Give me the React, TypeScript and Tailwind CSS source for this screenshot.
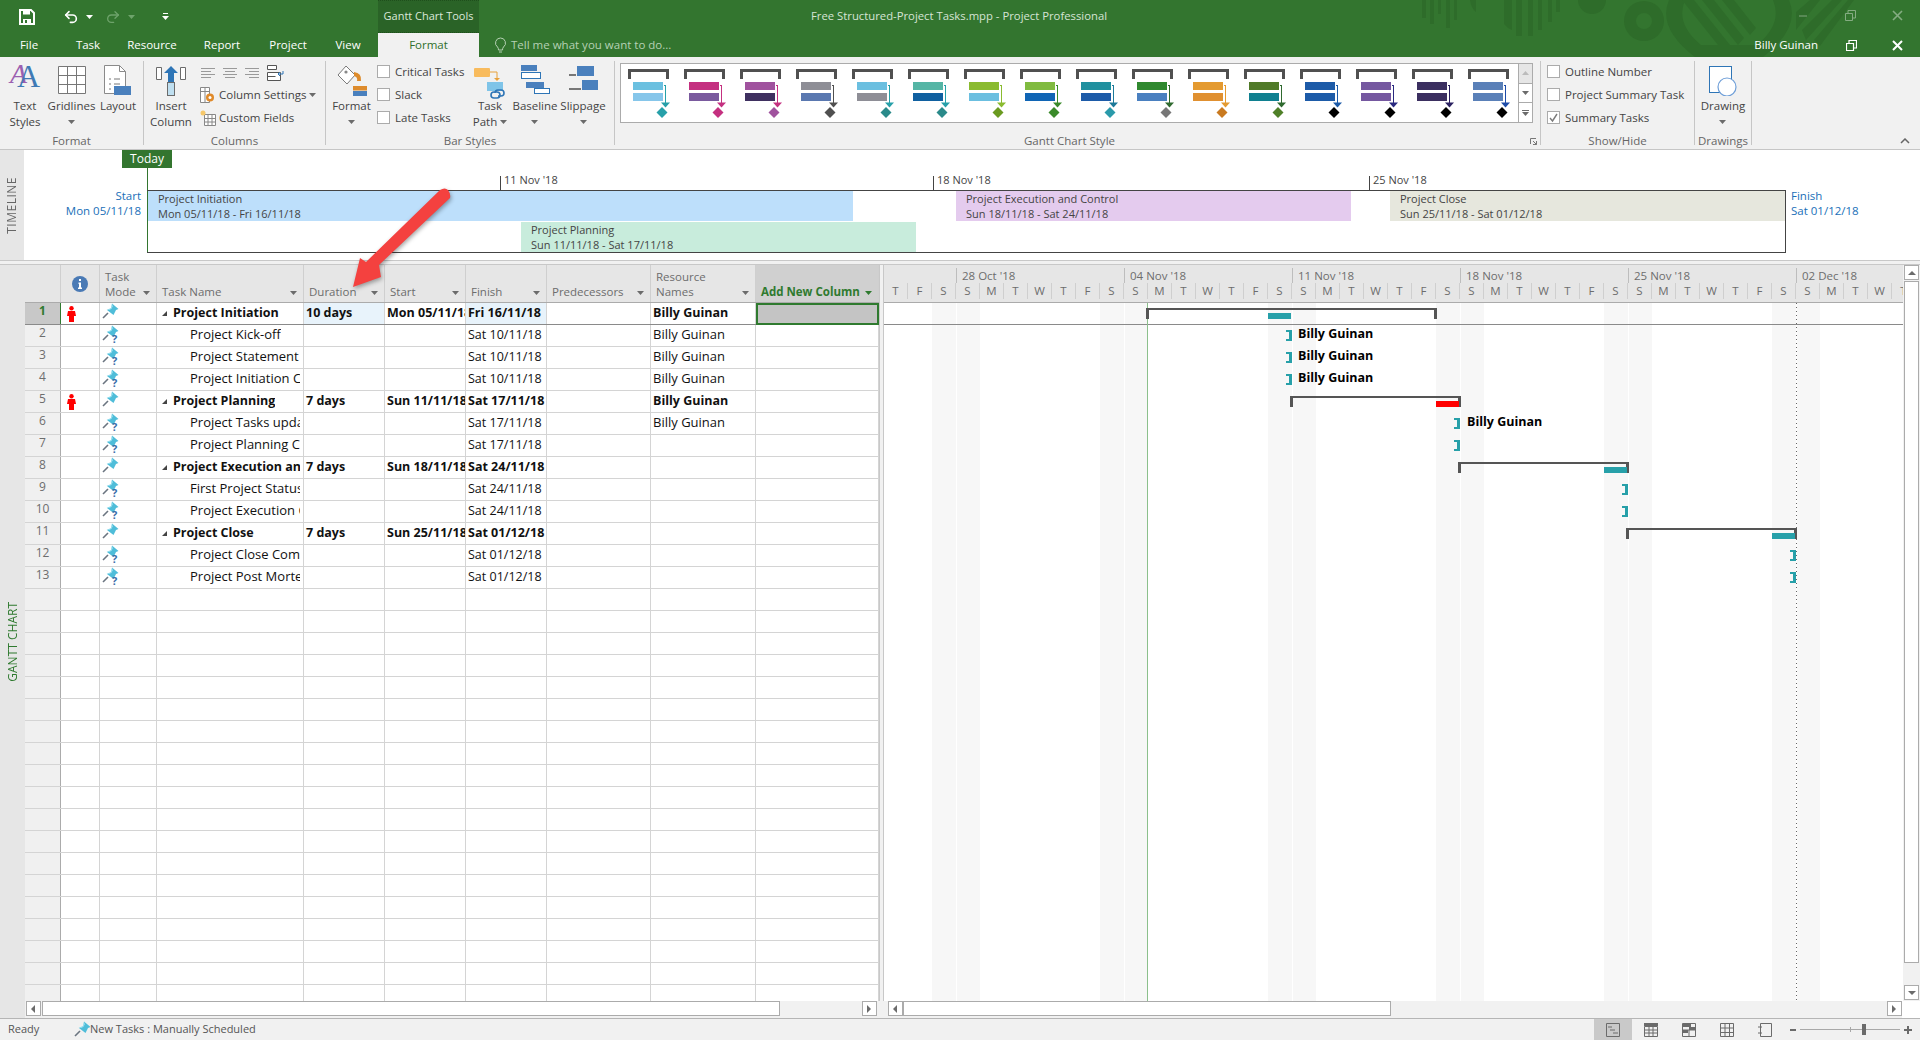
import { Undo2, Redo2 } from "lucide-react";

const GREEN = "#33752f";

const tabs = [
  { label: "File", w: "w-[58px]" },
  { label: "Task", w: "w-[60px]" },
  { label: "Resource", w: "w-[68px]" },
  { label: "Report", w: "w-[72px]" },
  { label: "Project", w: "w-[60px]" },
  { label: "View", w: "w-[60px]" },
];

const galleryStyles = [
  ["#6bc0e0", "#86c6ea", "#27a0a9", "#27a0a9"],
  ["#c43080", "#7a5a9e", "#c43080", "#c43080"],
  ["#a0529e", "#3f3060", "#c43080", "#a0529e"],
  ["#8e8e96", "#5a78b0", "#505050", "#505050"],
  ["#6bbfe0", "#8e8e96", "#27a0a9", "#2a8a8a"],
  ["#55b5a5", "#1060a0", "#27a0a9", "#2a8a8a"],
  ["#8abb30", "#6bbfe0", "#8abb30", "#6a9a20"],
  ["#80bb40", "#1065b5", "#3a8a2a", "#3a8a2a"],
  ["#20909f", "#1d5ba8", "#1d7a9a", "#2a9aaa"],
  ["#30892f", "#4a80c0", "#2f6a2f", "#777777"],
  ["#e49a30", "#e09030", "#e49a30", "#c97a20"],
  ["#507a28", "#108090", "#2f6a2f", "#4f8028"],
  ["#1d5ba8", "#1d5ba8", "#1d5ba8", "#000000"],
  ["#7558a0", "#7558a0", "#2a2a80", "#000000"],
  ["#3b2f60", "#3b2f60", "#2a2060", "#000000"],
  ["#5a80b8", "#5a80b8", "#1d4ba8", "#000000"],
];

const rows = [
  { n: 1, name: "Project Initiation", sum: true, late: true, dur: "10 days", start: "Mon 05/11/18", finish: "Fri 16/11/18", res: "Billy Guinan" },
  { n: 2, name: "Project Kick-off", finish: "Sat 10/11/18", res: "Billy Guinan" },
  { n: 3, name: "Project Statement of Work", finish: "Sat 10/11/18", res: "Billy Guinan" },
  { n: 4, name: "Project Initiation Complete", finish: "Sat 10/11/18", res: "Billy Guinan" },
  { n: 5, name: "Project Planning", sum: true, late: true, dur: "7 days", start: "Sun 11/11/18", finish: "Sat 17/11/18", res: "Billy Guinan" },
  { n: 6, name: "Project Tasks updated", finish: "Sat 17/11/18", res: "Billy Guinan" },
  { n: 7, name: "Project Planning Complete", finish: "Sat 17/11/18" },
  { n: 8, name: "Project Execution and Control", sum: true, dur: "7 days", start: "Sun 18/11/18", finish: "Sat 24/11/18" },
  { n: 9, name: "First Project Status Report", finish: "Sat 24/11/18" },
  { n: 10, name: "Project Execution Complete", finish: "Sat 24/11/18" },
  { n: 11, name: "Project Close", sum: true, dur: "7 days", start: "Sun 25/11/18", finish: "Sat 01/12/18" },
  { n: 12, name: "Project Close Complete", finish: "Sat 01/12/18" },
  { n: 13, name: "Project Post Mortem", finish: "Sat 01/12/18" },
];

const blankRows = Array.from({ length: 19 }, (_, i) => i);
const dayLetters = ["S", "M", "T", "W", "T", "F", "S"];
const weeks = ["28 Oct '18", "04 Nov '18", "11 Nov '18", "18 Nov '18", "25 Nov '18", "02 Dec '18"];
// gantt starts on a Thursday, 3 days before the first week tick
const days = ["T", "F", "S", ...Array.from({ length: 42 }, (_, i) => dayLetters[i % 7])];

const summaries = [
  { x: 262, w: 291, y: 5 },
  { x: 406, w: 171, y: 93 },
  { x: 574, w: 171, y: 159 },
  { x: 742, w: 171, y: 225 },
];
const teal = [
  { x: 384, y: 10, c: "#27a0a9" },
  { x: 552, y: 98, c: "#ff0000" },
  { x: 720, y: 164, c: "#27a0a9" },
  { x: 888, y: 230, c: "#27a0a9" },
];
const brackets = [
  { x: 402, y: 27 },
  { x: 402, y: 49 },
  { x: 402, y: 71 },
  { x: 570, y: 115 },
  { x: 570, y: 137 },
  { x: 738, y: 181 },
  { x: 738, y: 203 },
  { x: 906, y: 247 },
  { x: 906, y: 269 },
];
const ganttNames = [
  { x: 414, y: 22 },
  { x: 414, y: 44 },
  { x: 414, y: 66 },
  { x: 583, y: 110 },
];

const Caret = ({ color = "#6b6b6b" }: { color?: string }) => (
  <svg width="7" height="4" viewBox="0 0 7 4" className="flex-none">
    <path d="M0 0h7L3.5 4z" fill={color} />
  </svg>
);

const PinIcon = ({ question = true }: { question?: boolean }) => (
  <svg width="18" height="18" viewBox="0 0 18 18" className="mt-[-3px] flex-none">
    <path d="M1 15l5-5" stroke="#6b7580" strokeWidth="1.6" />
    <path d="M10 0.500l6.500 5.500-2.500 1-2.500 5-6.500-5 4.500-1.500z" fill="#4fbdd9" />
    <path d="M10 0.500l1 3-3 3.500-3.500 0 4.500-2z" fill="#8fdcee" />
    {question && (
      <text x="10" y="18" fontSize="11" fontWeight="700" fill="#3a6eaa" fontFamily="Open Sans, sans-serif">?</text>
    )}
  </svg>
);

const PersonIcon = () => (
  <svg width="9" height="16" viewBox="0 0 9 16" className="flex-none">
    <circle cx="4.5" cy="2.2" r="2.2" fill="#f00" />
    <path d="M1 5h7l1 5H7v6H2v-6H0z" fill="#f00" />
  </svg>
);

const Bracket = ({ x, y }: { x: number; y: number }) => (
  <div
    className="absolute h-[11px] w-[6px] border-y-2 border-r-[3px] border-[#27a0a9]"
    style={{ left: x, top: y }}
  />
);

const Summary = ({ x, w, y }: { x: number; w: number; y: number }) => (
  <div
    className="absolute h-[11px] border-x-[3px] border-t-2 border-[#555555]"
    style={{ left: x, top: y, width: w }}
  />
);

const Check = ({ label, on }: { label: string; on?: boolean }) => (
  <div className="flex h-[23px] items-center gap-[5px]">
    <div className="flex h-[13px] w-[13px] items-center justify-center border border-[#ababab] bg-white">
      {on && (
        <svg width="11" height="11" viewBox="0 0 11 11">
          <path d="M2 6l2.5 3L9 2" fill="none" stroke="#7a7a7a" strokeWidth="1.4" />
        </svg>
      )}
    </div>
    <span>{label}</span>
  </div>
);

const BigButton = ({
  w,
  icon,
  lines,
  caret,
  inlineCaret,
}: {
  w: string;
  icon: React.ReactNode;
  lines: string[];
  caret?: boolean;
  inlineCaret?: boolean;
}) => (
  <div className={`flex ${w} flex-none flex-col items-center`}>
    <div className="flex h-[34px] items-start justify-center">{icon}</div>
    <div className="mt-[2px] flex flex-col items-center whitespace-nowrap leading-[16px]">
      {lines.map((l, i) => (
        <div key={l} className="flex items-center gap-[3px]">
          <span>{l}</span>
          {inlineCaret && i === lines.length - 1 && <Caret />}
        </div>
      ))}
      {caret && (
        <div className="flex h-[16px] items-center">
          <Caret />
        </div>
      )}
    </div>
  </div>
);

const Group = ({
  w,
  label,
  labelClass = "",
  children,
}: {
  w: string;
  label: string;
  labelClass?: string;
  children: React.ReactNode;
}) => (
  <div className={`flex h-[92px] ${w} flex-none flex-col`}>
    <div className="flex h-[76px] pt-[5px]">{children}</div>
    <div className={`flex h-[16px] items-center justify-center text-[#666666] ${labelClass}`}>{label}</div>
  </div>
);

const Sep = () => <div className="my-1 w-px flex-none bg-[#c6c6c6]" />;

const TextStylesIcon = () => (
  <div className="relative h-[30px] w-[32px]">
    <span className="absolute left-[1px] top-[-4px] text-[28px] italic leading-[32px] text-[#9b5fb0] [font-family:'Liberation_Serif',serif]">A</span>
    <span className="absolute left-[8px] top-[-3px] text-[32px] leading-[34px] text-[#3f7ab5] [font-family:'Liberation_Serif',serif]">A</span>
  </div>
);

const GridIcon = () => (
  <svg width="30" height="30" viewBox="0 0 30 30" className="mt-[3px]">
    <path d="M1.5 1.5h27v27h-27zM1.5 10.5h27M1.5 19.5h27M10.5 1.5v27M19.5 1.5v27" fill="#fff" stroke="#777" />
  </svg>
);

const LayoutIcon = () => (
  <svg width="30" height="32" viewBox="0 0 30 32" className="mt-[2px]">
    <path d="M1.5 1.5h15l6 6v22h-21z" fill="#fff" stroke="#8a8a8a" />
    <path d="M16.5 1.5v6h6" fill="none" stroke="#8a8a8a" />
    <path d="M6 15h2M11 15h6M6 20h2M11 20h6M6 25h2" stroke="#777" />
    <rect x="11" y="22" width="17" height="9" fill="#4a80bd" />
  </svg>
);

const InsertIcon = () => (
  <svg width="32" height="32" viewBox="0 0 32 32" className="mt-[2px]">
    <path d="M1.5 3.5h5v12h-5zM25.5 3.5h5v12h-5z" fill="#fff" stroke="#6b6b6b" />
    <path d="M16 2l7 7h-4v9h-6V9H9z" fill="#2e75b6" />
    <rect x="12.5" y="18.5" width="7" height="13" fill="#bfdff0" stroke="#6b6b6b" />
  </svg>
);

const AlignIcon = ({ d }: { d: string }) => (
  <svg width="16" height="14" viewBox="0 0 16 14">
    <path d={d} stroke="#9a9a9a" />
  </svg>
);

const FormatIcon = () => (
  <svg width="30" height="32" viewBox="0 0 30 32" className="mt-[2px]">
    <path d="M9 2l9 9-8 9L1 11z" fill="#fff" stroke="#7a7a7a" />
    <circle cx="9" cy="8" r="1.6" fill="#888" />
    <path d="M17 8q8 1 7 9h-4q1-4-3-5z" fill="#dd8b2c" />
    <rect x="16" y="22" width="15" height="4.5" fill="#dd8b2c" />
    <rect x="16" y="27" width="15" height="5" fill="#4a80bd" />
  </svg>
);

const TaskPathIcon = () => (
  <svg width="32" height="34" viewBox="0 0 32 34" className="mt-[3px]">
    <rect x="0" y="3" width="16" height="9" rx="1" fill="#f8bb5d" />
    <path d="M16 7h7v7" fill="none" stroke="#e8a13a" />
    <path d="M20 13h6l-3 3z" fill="#e8a13a" />
    <rect x="13" y="17" width="16" height="9" fill="#7fc4e8" />
    <path d="M17 30a3 3 0 013-3h3a3 3 0 010 6h-3a3 3 0 01-3-3zM21 28a3 3 0 013-3h3a3 3 0 010 6h-3" fill="none" stroke="#2e75b6" strokeWidth="1.6" />
  </svg>
);

const BaselineIcon = () => (
  <svg width="30" height="30" viewBox="0 0 30 30" className="mt-[2px]">
    <rect x="1" y="1" width="16" height="6" fill="#4a80bd" />
    <rect x="1.5" y="8.5" width="19" height="6" fill="#fff" stroke="#2e75b6" />
    <rect x="6" y="18" width="18" height="6" fill="#4a80bd" />
    <rect x="14.5" y="24.5" width="15" height="5" fill="#fff" stroke="#2e75b6" />
  </svg>
);

const SlippageIcon = () => (
  <svg width="30" height="30" viewBox="0 0 30 30" className="mt-[2px]">
    <rect x="9" y="2" width="17" height="10" fill="#4a80bd" />
    <rect x="1" y="10" width="7" height="2" fill="#777" />
    <rect x="14" y="16" width="16" height="10" fill="#4a80bd" />
    <rect x="1" y="24" width="12" height="2" fill="#777" />
  </svg>
);

const DrawingIcon = () => (
  <svg width="30" height="32" viewBox="0 0 30 32" className="mt-[2px]">
    <rect x="1.5" y="2.5" width="22" height="26" fill="#fff" stroke="#2e75b6" />
    <circle cx="19" cy="23" r="9" fill="#fff" stroke="#6f9fd8" strokeWidth="1.2" />
  </svg>
);

const GalleryItem = ({ colors }: { colors: string[] }) => (
  <svg width="56" height="58" viewBox="0 0 56 58" className="flex-none" shapeRendering="crispEdges">
    <path d="M1.5 16V7h38v9" transform="translate(7 -1)" fill="none" stroke="#505050" strokeWidth="3" />
    <rect x="12" y="18" width="30" height="8" fill={colors[0]} />
    <rect x="12" y="29" width="30" height="8" fill={colors[1]} />
    <path d="M42.5 21h1.5v18" fill="none" stroke={colors[2]} />
    <path d="M40 38.5h9l-4.500 5z" fill={colors[2]} shapeRendering="auto" />
    <path d="M41 43l5.500 5.500-5.500 5.500-5.500-5.500z" fill={colors[3]} shapeRendering="auto" />
  </svg>
);

const TitleBar = () => (
  <div className="relative h-[57px] flex-none bg-[#33752f] text-white">
    {/* background art of the title bar */}
    <svg width="460" height="57" viewBox="0 0 460 57" className="absolute right-[40px] top-0">
      <g fill="#2e6c2a">
        <path d="M2 0h4v18H2zM10 0h4v24H10zM18 0h3v14h-3zM26 0h4v28h-4zM34 0h3v20h-3zM50 0h6v12q-5-4-6-12zM84 0h8v30q-5-2-8-6zM96 0h6v36h-6zM108 0h5v36h-5zM118 0h4v30h-4zM128 0h4v22h-4zM136 0h4v12h-4z" />
        <path d="M158 0h28a14 14 0 01-28 0z" />
        <path fillRule="evenodd" d="M224 1a20 20 0 100 40 20 20 0 000-40zm0 12a8 8 0 110 16 8 8 0 010-16z" />
        <path fillRule="evenodd" d="M249 0h120q12 28-26 57h-68q-38-29-26-57zm16 0q-10 24 16 45h56q26-21 16-45z" />
        <path d="M262 0l12 0 36 45h-12zM282 0h12l30 38-6 7zM302 0h12l22 28-6 7z" />
        <path d="M376 12l14-12h10l-24 30zM382 30l30-30h10l-36 40zM394 40l34-40h6l-34 46z" />
      </g>
    </svg>

    <div className="relative flex h-[33px]">
      <div className="flex w-[378px] flex-none items-center">
        <svg width="16" height="16" viewBox="0 0 16 16" className="ml-[19px] mr-[28px] flex-none">
          <path d="M1 1h11l3 3v11H1z" fill="none" stroke="#fff" strokeWidth="2" />
          <path d="M4 1.500h7v4H4zM4 10h8v5H4z" fill="#fff" />
          <path d="M6 11h2v3H6z" fill={GREEN} />
        </svg>
        <Undo2 size={16} strokeWidth={2.4} className="flex-none" />
        <div className="ml-[7px] mr-[12px]">
          <Caret color="#ffffff" />
        </div>
        <Redo2 size={16} strokeWidth={2} className="flex-none text-[#6ea36b]" />
        <div className="ml-[7px] mr-[27px]">
          <Caret color="#6ea36b" />
        </div>
        <svg width="7" height="7" viewBox="0 0 7 7" className="flex-none">
          <path d="M1 0h5v1H1zM0 3h7L3.500 7z" fill="#fff" />
        </svg>
      </div>
      <div className="flex w-[101px] flex-none items-center justify-center whitespace-nowrap border-y border-dotted border-[#1f4f1c] bg-[#2a6327] text-[11px] text-[#dbe8da]">
        Gantt Chart Tools
      </div>
      <div className="flex w-[332px] flex-none" />
      <div className="flex w-[296px] flex-none items-center justify-center whitespace-nowrap text-[11.3px] text-[#d6e4d5]">
        Free Structured-Project Tasks.mpp - Project Professional
      </div>
      <div className="ml-auto flex h-[30px] items-center opacity-40">
        <svg width="10" height="10" viewBox="0 0 10 10" className="mr-[37px]">
          <path d="M1 6h8" stroke="#fff" />
        </svg>
        <svg width="11" height="11" viewBox="0 0 11 11" className="mr-[36px]">
          <path d="M0.500 3.500h7v7h-7zM3 3V0.500h7.500V8H8" fill="none" stroke="#fff" />
        </svg>
        <svg width="11" height="11" viewBox="0 0 11 11" className="mr-[17px]">
          <path d="M1 1l9 9M10 1l-9 9" stroke="#fff" strokeWidth="1.6" />
        </svg>
      </div>
    </div>

    <div className="relative flex h-[24px] items-center">
      {tabs.map((t) => (
        <div key={t.label} className={`${t.w} flex-none text-center`}>
          {t.label}
        </div>
      ))}
      <div className="flex h-full w-[101px] flex-none items-center justify-center bg-[#f1f1f1] text-[#2f6f2b]">
        Format
      </div>
      <svg width="13" height="17" viewBox="0 0 13 17" className="ml-[15px] mr-[4px] flex-none">
        <path d="M6.500 1a5 5 0 00-3 9q1 1 1 3h4q0-2 1-3a5 5 0 00-3-9zM5 15h3" fill="none" stroke="#b6d1b4" />
      </svg>
      <span className="whitespace-nowrap text-[#b6d1b4]">Tell me what you want to do...</span>
      <span className="ml-auto flex-none whitespace-nowrap">Billy Guinan</span>
      <svg width="11" height="11" viewBox="0 0 11 11" className="ml-[28px] flex-none">
        <path d="M0.500 3.500h7v7h-7zM3 3V0.500h7.500V8H8" fill="none" stroke="#fff" strokeWidth="1.200" />
      </svg>
      <svg width="11" height="11" viewBox="0 0 11 11" className="ml-[35px] mr-[17px] flex-none">
        <path d="M1 1l9 9M10 1l-9 9" stroke="#fff" strokeWidth="2" />
      </svg>
    </div>
  </div>
);

const Ribbon = () => (
  <div className="flex h-[93px] flex-none border-b border-[#c6c6c6] bg-[#f1f1f1] text-[#444444]">
    <Group w="w-[143px]" label="Format">
      <BigButton w="w-[46px] ml-[2px]" icon={<TextStylesIcon />} lines={["Text", "Styles"]} />
      <BigButton w="w-[47px]" icon={<GridIcon />} lines={["Gridlines"]} caret />
      <BigButton w="w-[46px]" icon={<LayoutIcon />} lines={["Layout"]} />
    </Group>
    <Sep />
    <Group w="w-[181px]" label="Columns">
      <div className="ml-[1px] flex">
        <BigButton w="w-[52px]" icon={<InsertIcon />} lines={["Insert", "Column"]} />
      </div>
      <div className="ml-[3px] flex flex-col">
        <div className="flex h-[21px] items-center gap-[6px]">
          <AlignIcon d="M1 2.500h14M1 5.500h10M1 8.500h14M1 11.500h10" />
          <AlignIcon d="M1 2.500h14M3 5.500h10M1 8.500h14M3 11.500h10" />
          <AlignIcon d="M1 2.500h14M5 5.500h10M1 8.500h14M5 11.500h10" />
          <svg width="18" height="18" viewBox="0 0 18 18">
            <path d="M1.500 1.500h9v4h-9zM1.500 8.500h13v8h-13zM1.500 12.500h8" fill="#fff" stroke="#555" />
            <path d="M17 7v3h-5m2-2l-2 2 2 2" fill="none" stroke="#2e75b6" />
          </svg>
        </div>
        <div className="flex h-[23px] items-center gap-[3px] whitespace-nowrap">
          <svg width="16" height="16" viewBox="0 0 16 16" className="flex-none">
            <path d="M0.500 0.500h9v15h-9zM0.500 4.500h9M5 0.500v15" fill="#fff" stroke="#888" />
            <circle cx="10" cy="10.500" r="4" fill="#e08a2a" />
            <circle cx="10" cy="10.500" r="1.500" fill="#fff" />
          </svg>
          <span>Column Settings</span>
          <Caret />
        </div>
        <div className="flex h-[23px] items-center gap-[3px] whitespace-nowrap">
          <svg width="16" height="16" viewBox="0 0 16 16" className="flex-none">
            <path d="M4.500 4.500h11v11h-11zM4.500 8.500h11M4.500 12h11M8 4.500v11M12 4.500v11" fill="#fff" stroke="#888" />
            <circle cx="3" cy="3" r="2.500" fill="#f6c86b" />
          </svg>
          <span>Custom Fields</span>
        </div>
      </div>
    </Group>
    <Sep />
    <Group w="w-[288px]" label="Bar Styles">
      <BigButton w="w-[51px]" icon={<FormatIcon />} lines={["Format"]} caret />
      <div className="mt-[-2px] flex w-[91px] flex-none flex-col whitespace-nowrap">
        <Check label="Critical Tasks" />
        <Check label="Slack" />
        <Check label="Late Tasks" />
      </div>
      <BigButton w="w-[44px]" icon={<TaskPathIcon />} lines={["Task", "Path"]} inlineCaret />
      <BigButton w="w-[46px]" icon={<BaselineIcon />} lines={["Baseline"]} caret />
      <BigButton w="w-[50px]" icon={<SlippageIcon />} lines={["Slippage"]} caret />
    </Group>
    <Sep />
    <Group w="w-[925px]" label="Gantt Chart Style" labelClass="pr-[16px]">
      <div className="ml-[5px] mt-px flex h-[60px] w-[899px] flex-none border border-[#ababab] bg-white pl-0">
        {galleryStyles.map((c, i) => (
          <GalleryItem key={i} colors={c} />
        ))}
      </div>
      <div className="mt-px flex h-[60px] w-[14px] flex-none flex-col border-y border-r border-[#ababab] bg-white">
        <div className="flex flex-1 items-center justify-center border-b border-[#ababab] bg-[#e6e6e6]">
          <svg width="7" height="4" viewBox="0 0 7 4"><path d="M0 4h7L3.500 0z" fill="#bbb" /></svg>
        </div>
        <div className="flex flex-1 items-center justify-center border-b border-[#ababab]">
          <Caret />
        </div>
        <div className="flex flex-1 flex-col items-center justify-center gap-px">
          <div className="h-px w-[7px] bg-[#6b6b6b]" />
          <Caret />
        </div>
      </div>
      <svg width="7" height="7" viewBox="0 0 7 7" className="absolute left-[1530px] top-[138px]">
        <path d="M0.500 6V0.500H6M3 3l3.500 3.500M6.500 3v3.500H3" fill="none" stroke="#777" />
      </svg>
    </Group>
    <Sep />
    <Group w="w-[153px]" label="Show/Hide">
      <div className="ml-[6px] mt-[-2px] flex flex-col whitespace-nowrap">
        <Check label="Outline Number" />
        <Check label="Project Summary Task" />
        <Check label="Summary Tasks" on />
      </div>
    </Group>
    <Sep />
    <Group w="w-[56px]" label="Drawings">
      <BigButton w="w-[56px]" icon={<DrawingIcon />} lines={["Drawing"]} caret />
    </Group>
    <Sep />
    <div className="relative flex-1">
      <svg width="10" height="6" viewBox="0 0 10 6" className="absolute right-[10px] top-[81px]">
        <path d="M1 5l4-4 4 4" fill="none" stroke="#666" strokeWidth="1.500" />
      </svg>
    </div>
  </div>
);

const TimelineBar = ({
  x,
  y,
  w,
  h,
  color,
  title,
  dates,
}: {
  x: number;
  y: number;
  w: number;
  h: number;
  color: string;
  title: string;
  dates: string;
}) => (
  <div
    className="absolute overflow-hidden whitespace-nowrap pl-[10px] text-[11px] leading-[15px] text-[#444444]"
    style={{ left: x, top: y, width: w, height: h, backgroundColor: color }}
  >
    <div>{title}</div>
    <div>{dates}</div>
  </div>
);

const Timeline = () => (
  <div className="flex h-[110px] flex-none">
    <div className="flex w-[24px] flex-none items-center justify-center bg-[#e6e6e6]">
      <span className="rotate-180 text-[12px] tracking-[0.5px] text-[#666666] [writing-mode:vertical-rl]">TIMELINE</span>
    </div>
    {/* offsets below are from x=24, y=150 */}
    <div className="relative flex-1 bg-white">
      <div className="absolute left-[98px] top-0 flex h-[18px] w-[50px] items-center justify-center bg-[#33752f] text-[12px] text-white">Today</div>
      <div className="absolute left-[123px] top-[18px] h-[85px] w-px bg-[#33752f]" />
      <div className="absolute right-[135px] top-[40px] left-[123px] h-px bg-[#444444]" />
      <div className="absolute right-[135px] top-[102px] left-[123px] h-px bg-[#444444]" />
      <div className="absolute left-[1761px] top-[40px] h-[63px] w-px bg-[#444444]" />

      <div className="absolute left-[0px] top-[38px] w-[117px] text-right leading-[15px] text-[#1a6fb8]">
        <div>Start</div>
        <div>Mon 05/11/18</div>
      </div>
      <div className="absolute left-[1767px] top-[38px] leading-[15px] text-[#1a6fb8]">
        <div>Finish</div>
        <div>Sat 01/12/18</div>
      </div>

      {[
        { x: 476, t: "11 Nov '18" },
        { x: 909, t: "18 Nov '18" },
        { x: 1345, t: "25 Nov '18" },
      ].map((m) => (
        <div
          key={m.t}
          className="absolute top-[26px] h-[14px] whitespace-nowrap border-l border-[#444444] pl-[3px] text-[11px] leading-[8px] text-[#444444]"
          style={{ left: m.x }}
        >
          {m.t}
        </div>
      ))}

      <TimelineBar x={124} y={41} w={705} h={30} color="#bddffb" title="Project Initiation" dates="Mon 05/11/18 - Fri 16/11/18" />
      <TimelineBar x={497} y={72} w={395} h={30} color="#c8ecdc" title="Project Planning" dates="Sun 11/11/18 - Sat 17/11/18" />
      <TimelineBar x={932} y={41} w={395} h={30} color="#e4cbee" title="Project Execution and Control" dates="Sun 18/11/18 - Sat 24/11/18" />
      <TimelineBar x={1366} y={41} w={395} h={30} color="#e6e7dd" title="Project Close" dates="Sun 25/11/18 - Sat 01/12/18" />
    </div>
  </div>
);

const COL = {
  hdr: "w-[35px]",
  ind: "w-[40px]",
  mode: "w-[57px]",
  name: "w-[147px]",
  dur: "w-[81px]",
  start: "w-[81px]",
  finish: "w-[81px]",
  pred: "w-[104px]",
  res: "w-[105px]",
  add: "w-[123px]",
};

const HeadCell = ({ w, lines, green }: { w: string; lines: string[]; green?: boolean }) => (
  <div
    className={`${w} flex flex-none items-end justify-between border-r border-[#cfcfcf] pb-[3px] pl-[5px] pr-[6px] leading-[15px] ${
      green ? "bg-[#d0d0d0] font-bold text-[#2f7a2f]" : "text-[#6d6d6d]"
    }`}
  >
    <div className="whitespace-nowrap">
      {lines.map((l) => (
        <div key={l}>{l}</div>
      ))}
    </div>
    <div className="mb-[4px]">
      <Caret color={green ? "#2f7a2f" : "#6b6b6b"} />
    </div>
  </div>
);

const Cell = ({ w, children, className = "" }: { w: string; children?: React.ReactNode; className?: string }) => (
  <div className={`${w} flex h-full flex-none items-center overflow-hidden whitespace-nowrap border-r border-[#d4d4d4] pl-[2px] ${className}`}>
    {children}
  </div>
);

const SheetTable = () => (
  <div className="flex h-[736px] w-[854px] flex-none flex-col overflow-hidden bg-white text-[12.5px] text-[#111111]">
    <div className="flex h-[38px] flex-none border-b border-[#ababab] bg-[#e6e6e6] text-[11.5px]">
      <div className={`${COL.hdr} flex-none`} />
      <div className={`${COL.ind} flex flex-none items-center justify-center border-x border-[#cfcfcf]`}>
        <svg width="16" height="16" viewBox="0 0 16 16">
          <circle cx="8" cy="8" r="8" fill="#4a7ab5" />
          <path d="M7 3h2v2H7zM6.500 6.500H9v5h1V13H6v-1.500h1V8h-.5z" fill="#fff" />
        </svg>
      </div>
      <HeadCell w={COL.mode} lines={["Task", "Mode"]} />
      <HeadCell w={COL.name} lines={["Task Name"]} />
      <HeadCell w={COL.dur} lines={["Duration"]} />
      <HeadCell w={COL.start} lines={["Start"]} />
      <HeadCell w={COL.finish} lines={["Finish"]} />
      <HeadCell w={COL.pred} lines={["Predecessors"]} />
      <HeadCell w={COL.res} lines={["Resource", "Names"]} />
      <HeadCell w={COL.add} lines={["Add New Column"]} green />
    </div>

    {rows.map((r) => (
      <div key={r.n} className={`flex h-[22px] flex-none border-b ${r.n === 1 ? "border-[#8a8a8a]" : "border-[#d4d4d4]"}`}>
        <div
          className={`${COL.hdr} flex h-full flex-none justify-center text-[12px] leading-[16px] ${
            r.n === 1 ? "bg-[#c8c8c8] font-bold text-[#2f7a2f]" : "bg-[#f0f0f0] text-[#6d6d6d]"
          }`}
        >
          {r.n}
        </div>
        <div className={`${COL.ind} flex h-full flex-none items-center border-x pl-[6px] ${r.n === 1 ? "border-l-[#2f7a2f] border-r-[#d4d4d4]" : "border-l-[#ababab] border-r-[#d4d4d4]"}`}>
          {r.late && <PersonIcon />}
        </div>
        <Cell w={COL.mode} className="pl-[2px]">
          <PinIcon question={!r.sum} />
        </Cell>
        <Cell w={COL.name} className={`pr-[3px] ${r.sum ? "pl-[4px] font-bold" : "pb-[1px] pl-[33px] text-[13px]"}`}>
          {r.sum && (
            <svg width="7" height="7" viewBox="0 0 7 7" className="mr-[5px] flex-none">
              <path d="M6 1v5H1z" fill="#444" />
            </svg>
          )}
          <span className="overflow-hidden">{r.name}</span>
        </Cell>
        <Cell w={COL.dur} className={`font-bold ${r.n === 1 ? "bg-[#e8f3fb]" : ""}`}>
          {r.dur}
        </Cell>
        <Cell w={COL.start} className="font-bold">
          {r.start}
        </Cell>
        <Cell w={COL.finish} className={`${r.sum ? "font-bold" : ""} ${r.n === 1 ? "bg-[#e8f3fb]" : ""}`}>
          {r.finish}
        </Cell>
        <Cell w={COL.pred} />
        <Cell w={COL.res} className={r.sum ? "font-bold" : "pb-[1px] text-[13px]"}>
          {r.res}
        </Cell>
        {r.n === 1 ? (
          <div className={`${COL.add} h-[22px] flex-none border-2 border-[#2f7a2f] bg-[#c4c4c4]`} />
        ) : (
          <Cell w={COL.add} />
        )}
      </div>
    ))}

    {blankRows.map((i) => (
      <div key={i} className="flex h-[22px] flex-none border-b border-[#d4d4d4]">
        <div className={`${COL.hdr} h-full flex-none bg-[#f0f0f0]`} />
        <div className={`${COL.ind} h-full flex-none border-x border-l-[#ababab] border-r-[#d4d4d4]`} />
        <Cell w={COL.mode} />
        <Cell w={COL.name} />
        <Cell w={COL.dur} />
        <Cell w={COL.start} />
        <Cell w={COL.finish} />
        <Cell w={COL.pred} />
        <Cell w={COL.res} />
        <Cell w={COL.add} />
      </div>
    ))}
  </div>
);

const GanttChart = () => (
  <div className="flex h-[736px] w-[1019px] flex-none flex-col overflow-hidden text-[#6d6d6d]">
    {/* timescale */}
    <div className="flex h-[38px] flex-none flex-col border-b border-[#ababab] bg-[#e6e6e6] text-[11.5px]">
      <div className="flex h-[18px] flex-none items-end">
        <div className="w-[72px] flex-none" />
        {weeks.map((w) => (
          <div key={w} className="flex h-[15px] w-[168px] flex-none items-center whitespace-nowrap border-l border-[#bdbdbd] pl-[5px]">
            {w}
          </div>
        ))}
      </div>
      <div className="flex flex-1">
        {days.map((d, i) => (
          <div key={i} className="flex h-[16px] w-[24px] flex-none items-center justify-center border-r border-[#cfcfcf]">
            {d}
          </div>
        ))}
      </div>
    </div>

    {/* chart, bars placed from x=884 y=303 */}
    <div className="relative flex-1">
      <div className="absolute inset-0 flex">
        {days.map((d, i) => {
          const weekend = (i + 4) % 7 === 0 || (i + 4) % 7 === 6 || i === 2;
          return (
            <div
              key={i}
              className={`h-[698px] w-[24px] flex-none ${i % 7 === 3 ? "border-l border-white" : ""} ${weekend ? "bg-[#f7f7f7]" : "bg-white"}`}
            />
          );
        })}
      </div>

      <div className="absolute left-0 right-0 top-[21px] h-px bg-[#8a8a8a]" />
      <div className="absolute bottom-0 left-[263px] top-0 w-px bg-[#8cc08c]" />
      <div className="absolute bottom-0 left-[912px] top-0 w-px bg-[repeating-linear-gradient(to_bottom,#666666_0_1px,transparent_1px_4px)]" />

      {summaries.map((s) => (
        <Summary key={s.x} x={s.x} w={s.w} y={s.y} />
      ))}
      {teal.map((b) => (
        <div key={b.x} className="absolute h-[6px] w-[23px]" style={{ left: b.x, top: b.y, backgroundColor: b.c }} />
      ))}
      {brackets.map((b) => (
        <Bracket key={`${b.x}-${b.y}`} x={b.x} y={b.y} />
      ))}
      {ganttNames.map((n) => (
        <div key={n.y} className="absolute whitespace-nowrap text-[12.5px] font-bold leading-[18px] text-black" style={{ left: n.x, top: n.y }}>
          Billy Guinan
        </div>
      ))}
    </div>
  </div>
);

const ScrollBtn = ({ dir }: { dir: "left" | "right" | "up" | "down" }) => {
  const d = { left: "M5 0v8L1 4z", right: "M1 0v8l4-4z", up: "M0 6h8L4 2z", down: "M0 2h8L4 6z" }[dir];
  return (
    <div className="flex h-[15px] w-[15px] flex-none items-center justify-center border border-[#ababab] bg-white">
      <svg width="8" height="8" viewBox="0 0 8 8">
        <path d={d} fill="#6b6b6b" />
      </svg>
    </div>
  );
};

const Workspace = () => (
  <div className="flex min-h-0 flex-1 flex-col">
    <div className="h-px flex-none bg-[#c8c8c8]" />
    <div className="h-[3px] flex-none bg-[#f1f1f1]" />
    <div className="h-px flex-none bg-[#c8c8c8]" />
    <div className="flex min-h-0 flex-1">
      <div className="flex w-[25px] flex-none items-center justify-center bg-[#e6e6e6]">
        <span className="rotate-180 whitespace-nowrap text-[12px] text-[#2f7a2f] [writing-mode:vertical-rl]">GANTT CHART</span>
      </div>
      <div className="flex min-w-0 flex-1 flex-col">
        <div className="flex h-[736px] flex-none">
          <SheetTable />
          <div className="w-[5px] flex-none border-x border-[#c8c8c8] bg-[#f1f1f1]" />
          <GanttChart />
          <div className="ml-px flex w-[16px] flex-none flex-col">
            <ScrollBtn dir="up" />
            <div className="mt-px h-[682px] w-[15px] flex-none border border-[#ababab] bg-white" />
            <div className="flex-1 bg-[#f1f1f1]" />
            <ScrollBtn dir="down" />
            <div className="h-[1px] flex-none" />
          </div>
        </div>
        <div className="flex h-[17px] flex-none bg-[#f1f1f1]">
          <div className="mx-px">
            <ScrollBtn dir="left" />
          </div>
          <div className="h-[15px] w-[738px] flex-none border border-[#ababab] bg-white" />
          <div className="flex-1" />
          <div className="mr-[1px]">
            <ScrollBtn dir="right" />
          </div>
          <div className="w-[10px] flex-none" />
          <ScrollBtn dir="left" />
          <div className="h-[15px] w-[488px] flex-none border border-[#ababab] bg-white" />
          <div className="w-[496px] flex-none" />
          <ScrollBtn dir="right" />
          <div className="w-[18px] flex-none bg-white" />
        </div>
      </div>
    </div>
  </div>
);

const StatusBar = () => (
  <div className="flex h-[22px] flex-none items-center border-t border-[#b5b5b5] bg-[#f1f1f1] text-[11px] text-[#555555]">
    <span className="ml-[8px] w-[66px]">Ready</span>
    <div className="mt-[3px] flex">
      <PinIcon question={false} />
    </div>
    <span className="ml-[-2px]">New Tasks : Manually Scheduled</span>
    <div className="ml-auto flex h-full items-center">
      <div className="flex h-full w-[38px] items-center justify-center bg-[#c9c9c9]">
        <svg width="14" height="14" viewBox="0 0 14 14"><path d="M0.500 0.500h13v13H0.500zM2 4h4M4 7h5M7 10h5" fill="none" stroke="#6b6b6b" /></svg>
      </div>
      <div className="flex w-[38px] justify-center">
        <svg width="14" height="14" viewBox="0 0 14 14"><path d="M0 0h14v3H0z" fill="#6b6b6b" /><path d="M0.500 3.500h13v10h-13zM0.500 7h13M0.500 10h13M5 3.500v10M9 3.500v10" fill="none" stroke="#6b6b6b" /></svg>
      </div>
      <div className="flex w-[38px] justify-center">
        <svg width="14" height="14" viewBox="0 0 14 14"><path d="M0.500 0.500h13v13h-13zM0.500 7h13M7 7v7" fill="none" stroke="#6b6b6b" /><path d="M1 1h8v3H1zM7 4h6v3H7zM1 7h5v3H1z" fill="#6b6b6b" /></svg>
      </div>
      <div className="flex w-[38px] justify-center">
        <svg width="14" height="14" viewBox="0 0 14 14"><path d="M0.500 0.500h13v13h-13zM0.500 5h13M0.500 9.500h13M5 0.500v13M9.500 0.500v13" fill="none" stroke="#6b6b6b" /></svg>
      </div>
      <div className="flex w-[38px] justify-center">
        <svg width="14" height="14" viewBox="0 0 14 14"><path d="M2.500 0.500h11v13h-11zM0 4h4M0 10h4" fill="none" stroke="#6b6b6b" /></svg>
      </div>
      <div className="ml-[6px] h-[2px] w-[6px] bg-[#6b6b6b]" />
      <div className="relative ml-[4px] h-px w-[100px] bg-[#a8a8a8]">
        <div className="absolute left-[50px] top-[-2px] h-[5px] w-px bg-[#a8a8a8]" />
        <div className="absolute left-[62px] top-[-5px] h-[11px] w-[4px] bg-[#6b6b6b]" />
      </div>
      <svg width="8" height="8" viewBox="0 0 8 8" className="ml-[4px] mr-[8px]"><path d="M3 0h2v3h3v2H5v3H3V5H0V3h3z" fill="#6b6b6b" /></svg>
    </div>
  </div>
);

// red callout pointing at the Duration column
const Arrow = () => (
  <svg width="110" height="110" viewBox="0 0 110 110" className="absolute left-[345px] top-[185px] drop-shadow-[1px_2px_2px_rgba(0,0,0,0.35)]">
    <path d="M8 102L15 73l6 4L95 5q5-3 8 0 3 4 2 8L34 80l2 12z" fill="#f4413f" />
  </svg>
);

export default function App() {
  return (
    <div className="relative flex h-[1040px] w-[1920px] flex-col overflow-hidden bg-[#f1f1f1] text-[11.5px] [font-family:'Open_Sans',sans-serif]">
      <TitleBar />
      <Ribbon />
      <Timeline />
      <Workspace />
      <StatusBar />
      <Arrow />
    </div>
  );
}
